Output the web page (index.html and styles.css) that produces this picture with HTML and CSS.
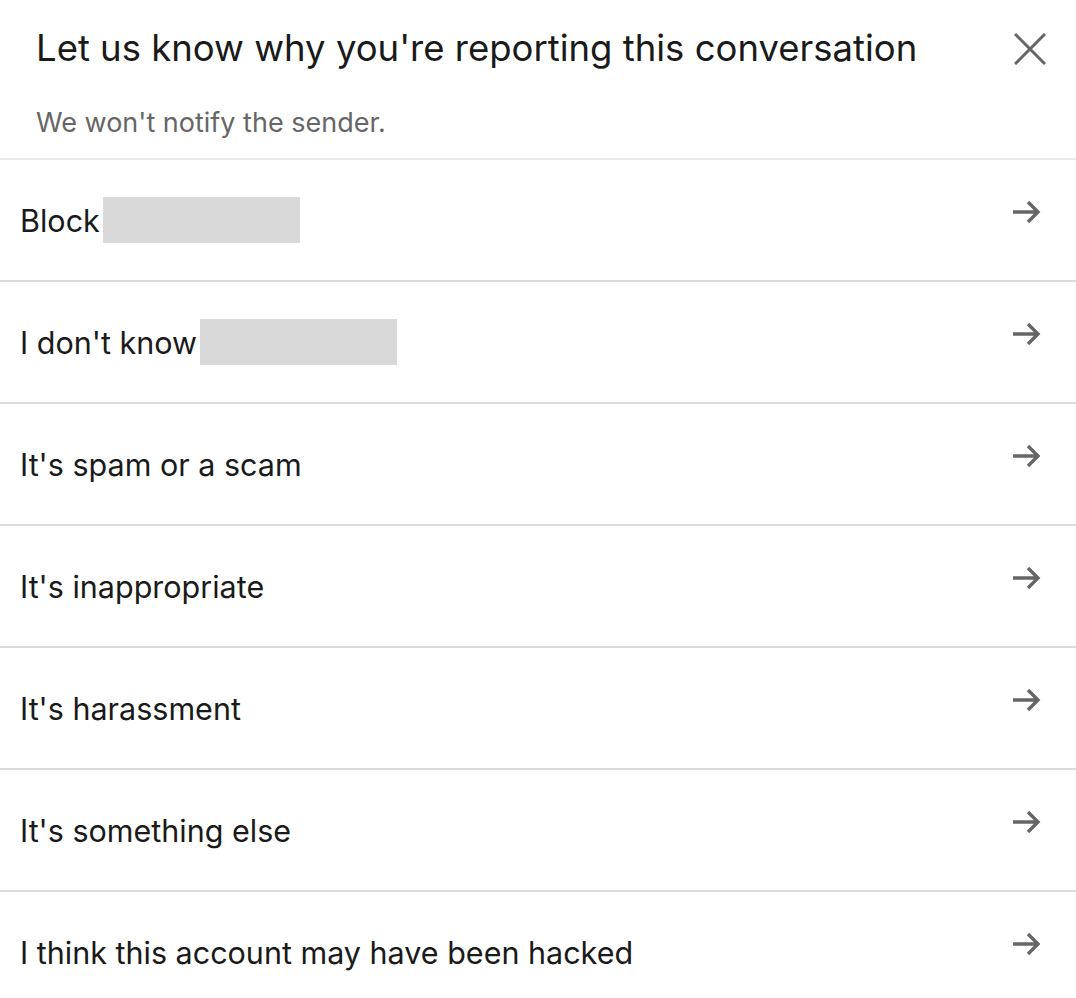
FILE: index.html
```html
<!DOCTYPE html>
<html lang="en">
<head>
    <meta charset="UTF-8">
    <meta name="viewport" content="width=device-width, initial-scale=1.0">
    <title>Report conversation</title>
    <link rel="stylesheet" href="styles.css">
</head>
<body>
    <div class="modal">
        <div class="modal-header">
            <h1>Let us know why you're reporting this conversation</h1>
            <button class="close-btn" aria-label="Close">
                <svg width="32" height="32" viewBox="0 0 32 32">
                    <path d="M1 1 L31 31 M31 1 L1 31" stroke="#666666" stroke-width="3" fill="none"/>
                </svg>
            </button>
            <p class="subtitle">We won't notify the sender.</p>
        </div>

        <ul class="options">
            <li class="option">
                <span class="label">Block <span class="redacted"></span></span>
                <svg class="arrow" width="28" height="22" viewBox="0 0 28 22"><path d="M0 11 H25 M15 1 L25 11 L15 21" stroke="#666666" stroke-width="3.4" fill="none"/></svg>
            </li>
            <li class="option">
                <span class="label">I don't know <span class="redacted"></span></span>
                <svg class="arrow" width="28" height="22" viewBox="0 0 28 22"><path d="M0 11 H25 M15 1 L25 11 L15 21" stroke="#666666" stroke-width="3.4" fill="none"/></svg>
            </li>
            <li class="option">
                <span class="label">It's spam or a scam</span>
                <svg class="arrow" width="28" height="22" viewBox="0 0 28 22"><path d="M0 11 H25 M15 1 L25 11 L15 21" stroke="#666666" stroke-width="3.4" fill="none"/></svg>
            </li>
            <li class="option">
                <span class="label">It's inappropriate</span>
                <svg class="arrow" width="28" height="22" viewBox="0 0 28 22"><path d="M0 11 H25 M15 1 L25 11 L15 21" stroke="#666666" stroke-width="3.4" fill="none"/></svg>
            </li>
            <li class="option">
                <span class="label">It's harassment</span>
                <svg class="arrow" width="28" height="22" viewBox="0 0 28 22"><path d="M0 11 H25 M15 1 L25 11 L15 21" stroke="#666666" stroke-width="3.4" fill="none"/></svg>
            </li>
            <li class="option">
                <span class="label">It's something else</span>
                <svg class="arrow" width="28" height="22" viewBox="0 0 28 22"><path d="M0 11 H25 M15 1 L25 11 L15 21" stroke="#666666" stroke-width="3.4" fill="none"/></svg>
            </li>
            <li class="option">
                <span class="label">I think this account may have been hacked</span>
                <svg class="arrow" width="28" height="22" viewBox="0 0 28 22"><path d="M0 11 H25 M15 1 L25 11 L15 21" stroke="#666666" stroke-width="3.4" fill="none"/></svg>
            </li>
        </ul>
    </div>
</body>
</html>
```

FILE: styles.css
```css
body {
    margin: 0;
    background: #ffffff;
    font-family: Inter, "Noto Sans", sans-serif;
    color: #1a1a1a;
}
.modal {
    width: 1076px;
}
.modal-header {
    position: relative;
    padding: 22px 36px 0 36px;
    height: 136px;
    border-bottom: 2px solid #e8e8e8;
}
h1 {
    margin: 0;
    font-size: 36.5px;
    font-weight: 400;
    line-height: 52px;
}
.subtitle {
    margin: 31px 0 0 0;
    font-size: 27px;
    line-height: 36px;
    color: #666666;
}
.close-btn {
    position: absolute;
    top: 33px;
    right: 30px;
    width: 32px;
    height: 32px;
    padding: 0;
    border: none;
    background: none;
    cursor: pointer;
}
.close-btn svg {
    display: block;
}
.options {
    list-style: none;
    margin: 0;
    padding: 0;
}
.option {
    display: flex;
    align-items: center;
    justify-content: space-between;
    height: 120px;
    padding: 0 35px 0 20px;
    border-bottom: 2px solid #dcdcdc;
    cursor: pointer;
}
.label {
    display: flex;
    align-items: center;
    font-size: 30.5px;
}
.redacted {
    display: inline-block;
    width: 197px;
    height: 46px;
    margin-left: 3px;
    background: #d9d9d9;
}
.arrow {
    margin-top: -16px;
}
```
